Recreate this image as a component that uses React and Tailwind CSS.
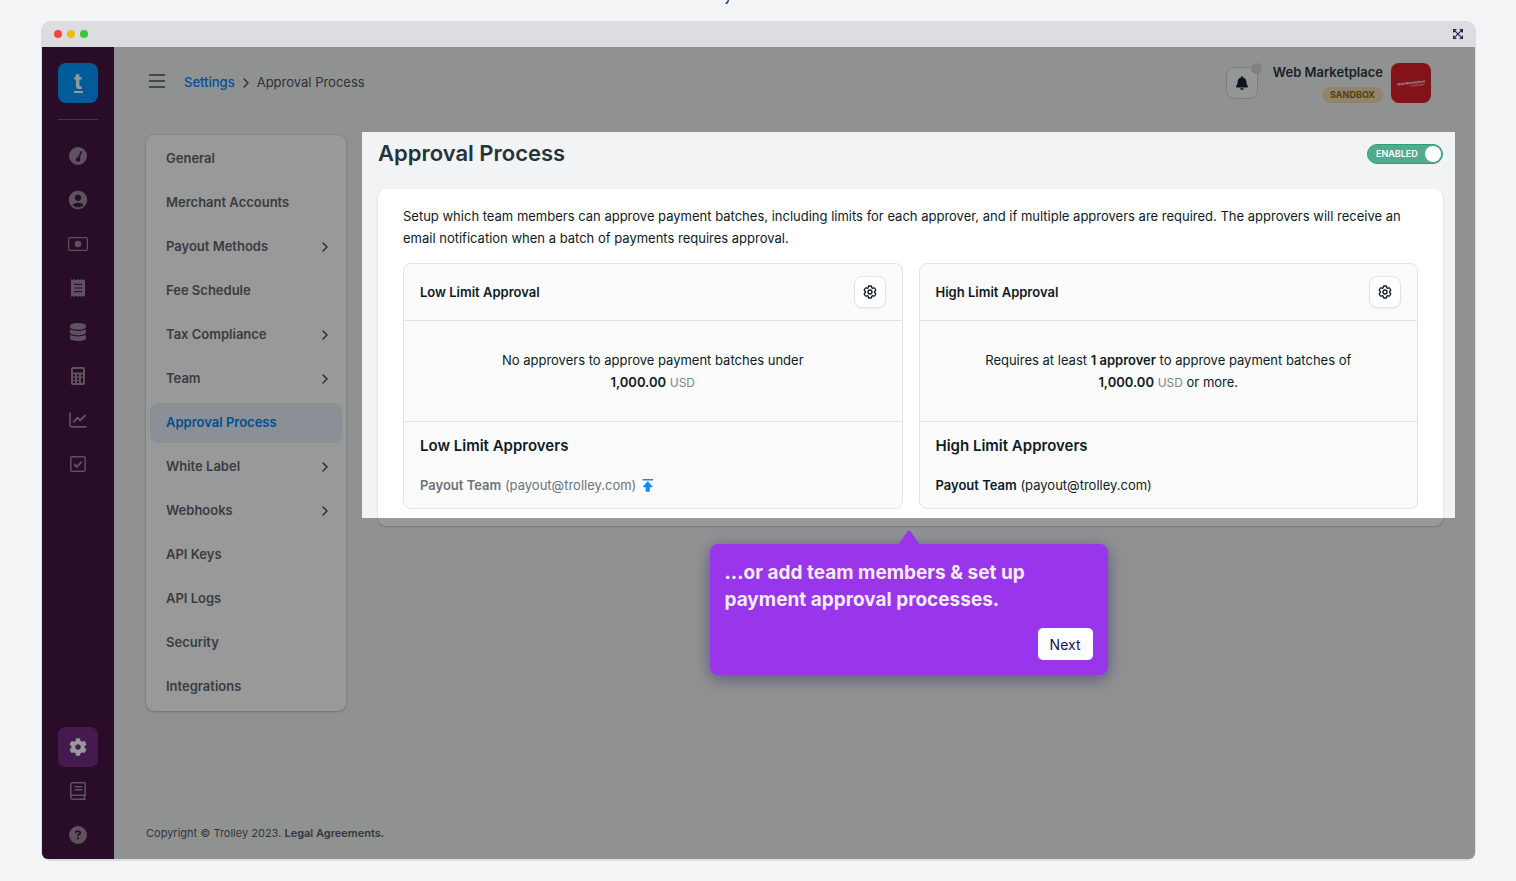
import React from "react";
import { FaDatabase, FaBell, FaCog } from "react-icons/fa";
import { FaCircleQuestion } from "react-icons/fa6";
import { MdAccountCircle } from "react-icons/md";
import { HiOutlineCog6Tooth } from "react-icons/hi2";
import { ChevronRight } from "lucide-react";

const GaugeIcon = () => (
  <svg viewBox="0 0 18 18" className="size-[18px]" aria-hidden="true">
    <path
      fill="currentColor"
      fillRule="evenodd"
      d="M9 0a9 9 0 1 0 0 18A9 9 0 0 0 9 0Zm3.500 4.200c.4.2.6.6.4 1.100l-2.200 5.600a2.300 2.300 0 1 1-1.500-.7l2.200-5.500c.2-.5.7-.7 1.100-.5Z"
    />
  </svg>
);

const CashIcon = () => (
  <svg viewBox="0 0 20 14" className="h-[14px] w-[20px]" aria-hidden="true">
    <rect x="0.600" y="0.600" width="18.800" height="12.800" rx="1.500" fill="none" stroke="currentColor" strokeWidth="1.200" />
    <circle cx="10" cy="7" r="3.300" fill="currentColor" />
  </svg>
);

const ReceiptIcon = () => (
  <svg viewBox="0 0 14 18" className="h-[18px] w-[14px]" aria-hidden="true">
    <path
      fill="currentColor"
      fillRule="evenodd"
      d="M0 0l1.700 1.300L3.500 0l1.700 1.300L7 0l1.700 1.300L10.500 0l1.700 1.300L14 0v18l-1.800-1.300-1.700 1.300-1.800-1.300L7 18l-1.800-1.300L3.500 18l-1.800-1.300L0 18V0Zm3 4.800v1.200h8V4.800H3Zm0 3.600v1.200h8V8.400H3Zm0 3.600v1.200h8V12H3Z"
    />
  </svg>
);

const CalculatorIcon = () => (
  <svg viewBox="0 0 14 18" className="h-[18px] w-[14px]" aria-hidden="true">
    <path
      fill="currentColor"
      fillRule="evenodd"
      d="M1.800 0h10.400C13.200 0 14 .8 14 1.800v14.400c0 1-.8 1.800-1.800 1.800H1.800C.8 18 0 17.200 0 16.200V1.800C0 .8.8 0 1.800 0ZM2 2v3.500h10V2H2Zm0 5.500v2h2v-2H2Zm4 0v2h2v-2H6Zm4 0v2h2v-2h-2Zm-8 3.300v2h2v-2H2Zm4 0v2h2v-2H6Zm4 0v5h2v-5h-2Zm-8 3.200v2h2v-2H2Zm4 0v2h2v-2H6Z"
    />
  </svg>
);

const ChartIcon = () => (
  <svg viewBox="0 0 18 16" className="h-[16px] w-[18px]" fill="none" stroke="currentColor" strokeWidth="1.700" strokeLinecap="round" strokeLinejoin="round" aria-hidden="true">
    <path d="M1 1v12.500c0 .8.500 1.300 1.300 1.300H17" />
    <path d="M4.800 9.800l3.700-4 2.600 2.600L16 3.500" strokeWidth="2" />
  </svg>
);

const CheckSquareIcon = () => (
  <svg viewBox="0 0 16 16" className="size-[16px]" fill="none" stroke="currentColor" strokeWidth="1.500" aria-hidden="true">
    <rect x="0.8" y="0.8" width="14.400" height="14.400" rx="1.500" />
    <path d="M4.200 8.200l2.600 2.600 5-5.200" strokeWidth="2" />
  </svg>
);

const BookIcon = () => (
  <svg viewBox="0 0 16 18" className="h-[18px] w-[16px]" fill="none" stroke="currentColor" strokeWidth="1.500" strokeLinecap="round" aria-hidden="true">
    <path d="M15.200 13V1.600c0-.5-.3-.8-.8-.8H2.800c-1.200 0-2 .8-2 2v12.400c0 1.200.8 2 2 2h12.400" />
    <path d="M1 14.500c.4-.9 1-1.300 1.800-1.300h12.400M14.300 13.500v3.500M5 4.800h7M5 7.800h7" />
  </svg>
);

const ExpandIcon = () => (
  <svg viewBox="0 0 10 10" className="size-[10px]" fill="none" stroke="currentColor" strokeWidth="1.200" aria-hidden="true">
    <path d="M.6 3.400V.6h2.800M6.600.6h2.800v2.800M9.400 6.600v2.800H6.600M3.400 9.400H.6V6.600M.6.6l8.800 8.800M9.400.6L.6 9.400" />
  </svg>
);

const MenuIcon = () => (
  <svg viewBox="0 0 16 14" className="h-[14px] w-[16px]" stroke="currentColor" strokeWidth="2" aria-hidden="true">
    <path d="M0 1h16M0 7h16M0 13h16" />
  </svg>
);

const PromoteIcon = () => (
  <svg viewBox="0 0 12 13" className="h-[13px] w-[12px]" fill="currentColor" aria-hidden="true">
    <path d="M.5 0h10.500v1.600H.5zM5.400 2.600a.5.5 0 0 1 .7 0l4.200 4.700c.3.400.1.900-.4.900H7.800v4c0 .3-.2.500-.5.500H4.200c-.3 0-.5-.2-.5-.5v-4H1.600c-.5 0-.7-.5-.4-.9z" />
  </svg>
);

const sideTop = [
  { label: "Dashboard", icon: <GaugeIcon /> },
  { label: "Recipients", icon: <MdAccountCircle className="size-[22px]" /> },
  { label: "Payments", icon: <CashIcon /> },
  { label: "Invoices", icon: <ReceiptIcon /> },
  { label: "Balances", icon: <FaDatabase className="size-[18px]" /> },
  { label: "Taxes", icon: <CalculatorIcon /> },
  { label: "Reports", icon: <ChartIcon /> },
  { label: "Approvals", icon: <CheckSquareIcon /> },
];

const sideBottom = [
  { label: "Settings", icon: <FaCog className="size-[18px]" />, active: true },
  { label: "Documentation", icon: <BookIcon /> },
  { label: "Help", icon: <FaCircleQuestion className="size-[18px]" /> },
];

const navItems = [
  { label: "General" },
  { label: "Merchant Accounts" },
  { label: "Payout Methods", more: true },
  { label: "Fee Schedule" },
  { label: "Tax Compliance", more: true },
  { label: "Team", more: true },
  { label: "Approval Process", active: true },
  { label: "White Label", more: true },
  { label: "Webhooks", more: true },
  { label: "API Keys" },
  { label: "API Logs" },
  { label: "Security" },
  { label: "Integrations" },
];

function SideButton({ label, icon, active }) {
  return (
    <button
      type="button"
      aria-label={label}
      className={
        active
          ? "flex size-10 items-center justify-center rounded-lg bg-[#742e84] text-white"
          : "flex size-10 items-center justify-center rounded-lg text-[#a087a0]"
      }
    >
      {icon}
    </button>
  );
}

function SideRail() {
  return (
    <aside className="flex w-[72px] shrink-0 flex-col items-center bg-[#441444] pt-4 pb-1">
      <a href="#home" aria-label="Trolley home" className="flex size-10 flex-col items-center justify-center rounded-lg bg-[#0099ff] pb-0.5 text-white">
        <span className="text-[22px] leading-[20px] font-bold">t</span>
        <span className="h-[2px] w-[9px] bg-white" />
      </a>
      <hr className="my-4 w-10 border-[#7b587c]" />
      <nav aria-label="Main" className="flex flex-col gap-1">
        {sideTop.map((i) => (
          <SideButton key={i.label} {...i} />
        ))}
      </nav>
      <div className="mt-auto flex flex-col gap-1">
        {sideBottom.map((i) => (
          <SideButton key={i.label} {...i} />
        ))}
      </div>
    </aside>
  );
}

function TopBar() {
  return (
    <header className="flex h-10 items-center pr-3">
      <button type="button" aria-label="Toggle menu" className="ml-[3px] pb-1 text-[#6b7880]">
        <MenuIcon />
      </button>
      <nav aria-label="Breadcrumb" className="ml-[19px] flex items-center gap-[3px] text-[13px]">
        <a href="#settings" className="font-medium text-[#0084f5]">Settings</a>
        <ChevronRight className="size-4 text-[#4b545c]" strokeWidth={2.25} />
        <span className="text-[#4b545c]">Approval Process</span>
      </nav>
      <div className="ml-auto flex items-center">
        <button type="button" aria-label="Notifications" className="relative flex size-8 items-center justify-center rounded-lg border border-[#cfd3d6] bg-[#f9fafa] text-[#14242f]">
          <FaBell className="size-[14px]" />
          <span className="absolute -top-[5px] -right-[5px] size-[11px] rounded-full bg-[#d5d7d8]" />
        </button>
        <div className="ml-[15px] flex flex-col items-end gap-[6px]">
          <span className="text-[13px] leading-[18px] font-semibold text-[#2b3741]">Web Marketplace</span>
          <span className="rounded-full bg-[#f0dcb8] px-2 text-[9px] leading-4 font-bold text-[#926b00]">SANDBOX</span>
        </div>
        <div className="ml-2 flex size-10 items-center justify-center rounded-lg bg-[#dd1e2b]">
          <svg viewBox="0 0 40 40" className="size-10" role="img" aria-label="Web Marketplace logo">
            <g transform="rotate(-7 20 20)" fill="#fff">
              <text x="6" y="21" fontSize="3.300" fontWeight="700" fontFamily="Inter, sans-serif">Web Marketplace</text>
              <rect x="19" y="22.500" width="14" height="1" opacity="0.600" />
            </g>
          </svg>
        </div>
      </div>
    </header>
  );
}

function SettingsNav() {
  return (
    <nav aria-label="Settings" className="mt-[3px] flex w-[200px] shrink-0 flex-col gap-1 self-start rounded-lg bg-white p-1 shadow-[0_0_2px_rgba(0,0,0,0.25),0_1px_2px_rgba(0,0,0,0.15)]">
      {navItems.map((i) => (
        <a
          key={i.label}
          href="#nav"
          aria-current={i.active ? "page" : undefined}
          className={
            i.active
              ? "flex h-10 items-center justify-between rounded-lg bg-[#e7f0fa] pr-[9px] pl-4 text-[13px] font-semibold text-[#0084f5]"
              : "flex h-10 items-center justify-between rounded-lg pr-[9px] pl-4 text-[13px] font-semibold text-[#5f666d]"
          }
        >
          {i.label}
          {i.more && <ChevronRight className="size-4 text-[#3b464e]" strokeWidth={2} />}
        </a>
      ))}
    </nav>
  );
}

function LimitCard({ title, approversTitle, muted, children }) {
  return (
    <section className="flex flex-col rounded-lg border border-[#e1e4e6] bg-[#fbfbfb]">
      <div className="flex h-14 items-center justify-between px-4">
        <h2 className="text-[13px] font-semibold">{title}</h2>
        <button type="button" aria-label={title + " settings"} className="flex size-8 items-center justify-center rounded-lg border border-[#e1e4e6] bg-white shadow-xs">
          <HiOutlineCog6Tooth className="size-4" strokeWidth={2} />
        </button>
      </div>
      <div className="border-y border-[#e1e4e6] px-12 pt-7 pb-[27px] text-center">{children}</div>
      <div className="px-4 pt-[13px] pb-3">
        <h3 className="text-[15px] leading-[22px] font-semibold">{approversTitle}</h3>
        <p className={muted ? "mt-[17px] flex items-center gap-[6px] text-[#6b747b]" : "mt-[17px] flex items-center gap-[6px]"}>
          <span>
            <span className="font-semibold">Payout Team</span> (payout@trolley.com)
          </span>
          {muted && (
            <button type="button" aria-label="Promote approver" className="text-[#0a8bff]">
              <PromoteIcon />
            </button>
          )}
        </p>
      </div>
    </section>
  );
}

function Spotlight() {
  return (
    <div className="pointer-events-none absolute top-0 -right-3 bottom-2 -left-4 z-10 shadow-[0_0_0_3000px_rgba(0,0,0,0.4)]">
      <div role="dialog" aria-label="Product tour" className="pointer-events-auto absolute top-full left-1/2 mt-[26px] w-[398px] -translate-x-1/2 rounded-lg bg-[#9935eb] p-[15px] text-white shadow-[0_4px_16px_rgba(50,55,110,0.6)]">
        <svg viewBox="0 0 22 15" className="absolute -top-[14px] left-1/2 h-[15px] w-[22px] -translate-x-1/2 text-[#9935eb]" fill="currentColor" aria-hidden="true">
          <path d="M0 15L9.500 1.200c.8-1.100 2.200-1.100 3 0L22 15z" />
        </svg>
        <p className="text-[19px] leading-[27px] font-bold text-[#f5ebff]">
          ...or add team members &amp; set up
          <br />
          payment approval processes.
        </p>
        <div className="mt-[15px] flex justify-end">
          <button type="button" className="h-8 rounded-[5px] bg-white px-3 text-[14px] text-[#15104d]">
            Next
          </button>
        </div>
      </div>
    </div>
  );
}

function ApprovalPanel() {
  return (
    <main className="relative min-w-0 flex-1 self-start">
      <div className="flex h-[57px] items-start justify-between">
        <h1 className="pt-[6px] text-[22px] leading-[30px] font-semibold text-[#26333c]">Approval Process</h1>
        <label className="relative mt-3 flex h-5 w-[76px] cursor-pointer items-center rounded-full border border-[#2f9f7a] bg-[#53ab8d] pl-2 text-[9px] font-semibold text-white">
          <input type="checkbox" defaultChecked className="sr-only" />
          ENABLED
          <span className="absolute right-px size-4 rounded-full bg-white" />
        </label>
      </div>
      <div className="rounded-lg border border-white bg-white px-6 pt-[15px] pb-4 text-[13px] leading-[22px] text-[#0d1b26] shadow-[0_1px_2px_rgba(0,0,0,0.2)]">
        <p>
          Setup which team members can approve payment batches, including limits for each approver, and if multiple
          approvers are required. The approvers will receive an email notification when a batch of payments requires
          approval.
        </p>
        <div className="mt-[14px] grid grid-cols-2 gap-4">
          <LimitCard title="Low Limit Approval" approversTitle="Low Limit Approvers" muted>
            No approvers to approve payment batches under
            <br />
            <b className="font-semibold">1,000.00</b> <span className="text-[12px] text-[#7b8389]">USD</span>
          </LimitCard>
          <LimitCard title="High Limit Approval" approversTitle="High Limit Approvers">
            Requires at least <b className="font-semibold">1 approver</b> to approve payment batches of
            <br />
            <b className="font-semibold">1,000.00</b> <span className="text-[12px] text-[#7b8389]">USD</span> or more.
          </LimitCard>
        </div>
      </div>
      <Spotlight />
    </main>
  );
}

export default function App() {
  return (
    <div className="flex min-h-screen flex-col bg-[#f3f4f6] pr-10 pb-5 pl-[41px] font-['Inter',sans-serif]">
      <div className="flex h-[21px] justify-center">
        <svg viewBox="0 0 6 4" className="mr-16 h-1 w-[6px]" aria-hidden="true">
          <path d="M4.500 0C4 2 3 3.500 1.500 3.500" stroke="#1d3f86" strokeWidth="1.500" fill="none" />
        </svg>
      </div>
      <div className="flex flex-1 flex-col rounded-[10px] bg-[#dddce1] px-px pb-[2px]">
        <div className="flex h-[26px] items-center gap-[5px] px-3">
          <span className="size-2 rounded-full bg-[#f8433a]" />
          <span className="size-2 rounded-full bg-[#e9c100]" />
          <span className="size-2 rounded-full bg-[#3bc83a]" />
          <button type="button" aria-label="Full screen" className="ml-auto text-[#28235c]">
            <ExpandIcon />
          </button>
        </div>
        <div className="flex flex-1 overflow-hidden rounded-b-md bg-[#f1f3f4]">
          <SideRail />
          <div className="flex min-w-0 flex-1 flex-col px-8 pt-4">
            <TopBar />
            <div className="mt-[29px] flex gap-8">
              <SettingsNav />
              <ApprovalPanel />
            </div>
            <footer className="mt-auto pb-[18px] text-[11px] leading-4 text-[#555d64]">
              Copyright © Trolley 2023.{" "}
              <a href="#legal" className="font-semibold">Legal Agreements.</a>
            </footer>
          </div>
        </div>
      </div>
    </div>
  );
}
